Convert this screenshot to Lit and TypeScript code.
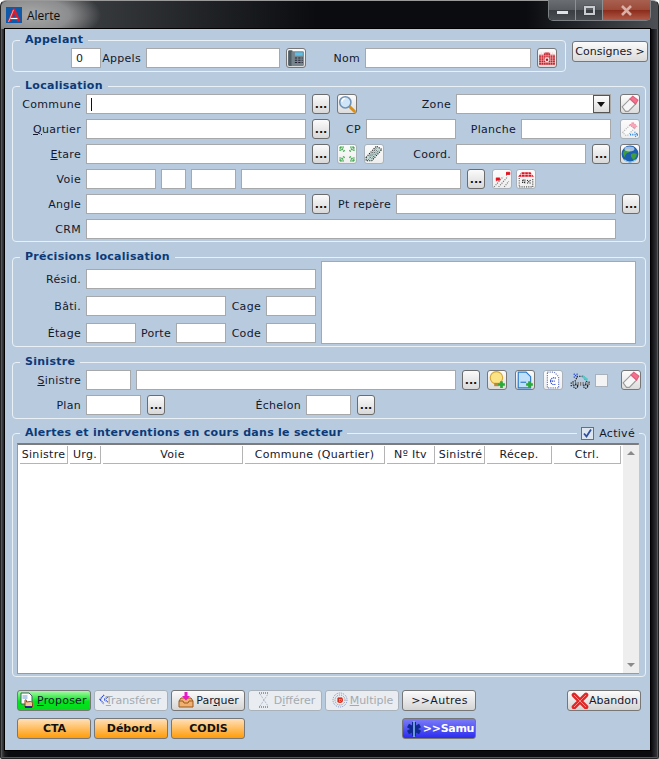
import { css, html, LitElement, svg } from "lit";
import { customElement } from "lit/decorators.js";

const icons = {
  phone: svg`<rect x="1" y="1" width="4" height="14" rx="1" fill="#4e5c64"/><rect x="4" y="2" width="11" height="13" rx="1" fill="#76858c"/><rect x="7" y="3" width="7" height="3" fill="#5cc0e8"/><path d="M7 8h2M10 8h2M13 8h1M7 10h2M10 10h2M13 10h1M7 12h2M10 12h2M13 12h1" stroke="#223" stroke-width="1"/>`,
  folderRed: svg`<path d="M1 5h4l1-2h4l1 2h4v9H1z" fill="#c41c28"/><path d="M1 6h14M1 8h14M1 10h14M1 12h14M3 3v11M5 3v11M7 3v11M9 3v11M11 3v11M13 3v11" stroke="#f6c4c4" stroke-width=".5"/><circle cx="8" cy="9.500" r="2.200" fill="#fbe8e8"/><circle cx="8" cy="9.500" r="1.100" fill="#b01820"/>`,
  search: svg`<path d="M10 10l4.500 4.500" stroke="#d8901c" stroke-width="2.600" stroke-linecap="round"/><circle cx="6.500" cy="6.500" r="5" fill="#cfe6f8" stroke="#6f93b8" stroke-width="1.400"/><path d="M3.500 6a3 3 0 0 1 3-3" stroke="#fff" stroke-width="1.300" fill="none"/>`,
  eraser: svg`<path d="M1 10.500L8 3.500l5 4.500-6.500 6.500H4z" fill="#f6f6f6" stroke="#9a9a9a"/><path d="M8 3.500L10.500 1 15 4.500 13 8z" fill="#f4708e" stroke="#e0607c"/>`,
  eraserOff: svg`<path d="M1.500 11L8 4.500l4 3-6 6H4z" fill="#fafafa" stroke="#b4b4b4" stroke-dasharray="1 1"/><path d="M8 4.500l2.500-2.500 3.500 3.500-2 2z" fill="#f6a8b8" stroke="#f08aa0" stroke-dasharray="1 1"/><path d="M8 13h7" stroke="#2a86e0" stroke-width="1.600" stroke-dasharray="1 1"/><path d="M12 10.500l3 2.500-3 2.500" fill="none" stroke="#2a86e0" stroke-dasharray="1 1"/>`,
  expand: svg`<g fill="none" stroke="#3ca84a" stroke-width="1.800" stroke-dasharray="1.200 .8"><path d="M2 2l4 4M2 2h3M2 2v3M14 2l-4 4M14 2h-3M14 2v3M2 14l4-4M2 14h3M2 14v-3M14 14l-4-4M14 14h-3M14 14v-3"/></g>`,
  map: svg`<path d="M1 11L10 1l5 3-9 10-5 0z" fill="#c4dcd8" stroke="#222" stroke-dasharray="1 1"/><path d="M4 10l6-7M6 12l6-7M3 13l8-9" stroke="#333" stroke-width=".8" stroke-dasharray="1 1"/>`,
  globe: svg`<circle cx="8" cy="8" r="7.500" fill="#1c5fae"/><path d="M2 6c2-2 4-3 6-2 1 1-1 3-2 3S3 9 4 11C2 10 1.500 8 2 6zM9 8c2-1 4-1 5 0 0 2-1 4-3 5-1-1-3-3-2-5z" fill="#3f9e3a"/><ellipse cx="7.500" cy="3.500" rx="4.500" ry="2.200" fill="#fff" opacity=".6"/><path d="M3 13a7 7 0 0 0 10 0" stroke="#8fd0f8" fill="none"/>`,
  road: svg`<path d="M1 15L9 6M5 15l8-9M10 15l4-5" stroke="#777" stroke-dasharray="1 1" fill="none"/><path d="M3 10V7M3 7h3v2H3zM12 5V2M12 2h3v2h-3z" fill="#e01020" stroke="#e01020" stroke-width=".7"/>`,
  house: svg`<path d="M1 6l3-4h8l3 4z" fill="#e01020"/><path d="M1 4h14M4 2v4M7 2v4M10 2v4M13 2v4" stroke="#fff" stroke-width=".5"/><path d="M2 7v8h12V7" fill="none" stroke="#555" stroke-dasharray="1 1"/><path d="M5 9h2v3M5 9v2h2M9 9l3 3M12 9l-3 3" stroke="#222" stroke-dasharray="1 .6" fill="none"/>`,
  bulb: svg`<circle cx="7.500" cy="6" r="5.500" fill="#fbe486" stroke="#d8a838"/><path d="M5.500 10.500h4v3h-4z" fill="#b88838"/><path d="M12 9v6M9 12h6" stroke="#2aa838" stroke-width="2.400"/>`,
  docAdd: svg`<path d="M2 1h7l4 4v10H2z" fill="#bfe0f8" stroke="#2a78c8"/><path d="M4 10h5" stroke="#2a78c8"/><path d="M12 9v6M9 12h6" stroke="#2aa838" stroke-width="2.400"/>`,
  docE: svg`<path d="M3 1h6l4 4v10H3z" fill="#fff" stroke="#6a7ac0" stroke-dasharray="1 1"/><path d="M10.500 6.500a3 3 0 1 0 0 5M5.500 9h4" fill="none" stroke="#2040d0" stroke-dasharray="1 .6"/>`,
  car: svg`<path d="M1 13v-3l3-1 2-4h5l2 4 3 1v2" fill="none" stroke="#222" stroke-dasharray="1 1"/><path d="M2 11h13" stroke="#777" stroke-width="3" stroke-dasharray="1 1"/><circle cx="4.500" cy="13" r="1.600" fill="none" stroke="#222" stroke-dasharray="1 .6"/><circle cx="12.500" cy="13" r="1.600" fill="none" stroke="#222" stroke-dasharray="1 .6"/><path d="M3 3l3 3M6 3L3 6" stroke="#2040d0" stroke-dasharray="1 .6"/><path d="M10 5l4 3" stroke="#58c8c8" stroke-width="2"/>`,
  propose: svg`<path d="M2 1h8l3 3v8H2z" fill="#fff" stroke="#557"/><path d="M3.500 4h5M3.500 6h5" stroke="#6a9ad0"/><path d="M6 15V8.500c0-1 1.500-1 1.500 0V10l4-.5c1 0 2 .5 2 2V15z" fill="#f4c79a" stroke="#8a4a20"/><path d="M6 15h7" stroke="#1010a0" stroke-width="1.600"/>`,
  transfer: svg`<path d="M6 3L2 7.500 6 12M10 5L6 7.500l4 2.500" fill="none" stroke="#2040d0" stroke-width="1.400" stroke-dasharray="1 .7"/>`,
  park: svg`<path d="M1 9l2-3h10l2 3v6H1z" fill="#f0b070" stroke="#9a5a20"/><path d="M1 9h4l1 2h4l1-2h4" fill="none" stroke="#9a5a20"/><path d="M6.500 0h3v4h2.500L8 8.500 4 4h2.500z" fill="#e818c8"/>`,
  hourglass: svg`<g fill="none" stroke-dasharray="1 1"><path d="M3 1h10M3 15h10" stroke="#c89060" stroke-width="2"/><path d="M4 2l4 6 4-6M4 14l4-6 4 6" stroke="#9ab"/></g>`,
  multiple: svg`<circle cx="8" cy="8" r="7" fill="none" stroke="#7a8cc0" stroke-dasharray="1 1"/><circle cx="8" cy="8" r="5" fill="none" stroke="#888" stroke-dasharray="1 1"/><circle cx="8" cy="8" r="3" fill="#d83020"/><path d="M5 8h6M8 5v6" stroke="#fff" stroke-width=".6" stroke-dasharray="1 1"/>`,
  cross: svg`<path d="M3 3l12 12M15 3L3 15" stroke="#e02828" stroke-width="4.600" stroke-linecap="round"/><path d="M3 3l12 12M15 3L3 15" stroke="#f88" stroke-width="1"/>`,
  star: svg`<g stroke="#0e2a90" stroke-width="4"><path d="M9 2v14M3 5.500l12 7M15 5.500l-12 7"/></g><path d="M9 1v16" stroke="#8fc0f0" stroke-width="1.500"/>`,
};
type IconName = keyof typeof icons;

const columns = [
  ["Sinistre", 50],
  ["Urg.", 33],
  ["Voie", 142],
  ["Commune (Quartier)", 142],
  ["Nº Itv", 50],
  ["Sinistré", 50],
  ["Récep.", 67],
  ["Ctrl.", 69],
] as const;

@customElement("app-root")
export class AppRoot extends LitElement {
  private lab(text: unknown, w: number) {
    return html`<label class="lab" style="width:${w}px">${text}</label>`;
  }

  private inp(w: number, ml = 0, value = "") {
    return html`<input class="inp" style="width:${w}px;margin-left:${ml}px" .value=${value} />`;
  }

  private more(ml = 6) {
    return html`<button class="more" style="margin-left:${ml}px">...</button>`;
  }

  private ic(name: IconName, ml = 7, off = false) {
    return html`<button class="ic ${off ? "off" : ""}" style="margin-left:${ml}px">
      <svg width="18" height="18" viewBox="0 0 16 16">${icons[name]}</svg>
    </button>`;
  }

  private action(name: IconName, label: unknown, kind = "") {
    return html`<button class="act ${kind}">
      <svg width="18" height="17" viewBox="0 0 18 17">${icons[name]}</svg><span>${label}</span>
    </button>`;
  }

  render() {
    return html`
      <div class="window">
        <div class="title">
          <svg class="logo" width="16" height="16" viewBox="0 0 16 16">
            <rect width="16" height="16" fill="#0f5aa8" />
            <path d="M1.500 14.500L7 1.500h2l5.500 13h-3.200L8 6.500l-3.300 8z" fill="#e01c2c" />
            <path d="M4.500 11.500h7" stroke="#fff" stroke-width="1.200" />
            <path d="M2.500 15L7.500 2.800" stroke="#fff" stroke-width=".6" />
          </svg>
          <span class="caption">Alerte</span>
          <div class="caps">
            <div class="cap"><i class="min"></i></div>
            <div class="cap"><i class="max"></i></div>
            <div class="cap close">
              <svg width="13" height="11" viewBox="0 0 13 11">
                <path d="M2 1l9 9M11 1l-9 9" stroke="#d8b0a8" stroke-width="2.600" />
              </svg>
            </div>
          </div>
        </div>

        <div class="client">
          <div class="top">
            <fieldset class="appelant">
              <legend>Appelant</legend>
              <div class="row">
                ${this.inp(30, 58, "0")} ${this.lab("Appels", 40)} ${this.inp(134)}
                ${this.ic("phone", 6)} ${this.lab("Nom", 54)} ${this.inp(166)}
                ${this.ic("folderRed", 6)}
              </div>
            </fieldset>
            <button class="consignes">Consignes &gt;</button>
          </div>

          <fieldset>
            <legend>Localisation</legend>
            <div class="rows">
              <div class="row">
                ${this.lab("Commune", 68)}
                <input class="inp caret" style="width:220px" />
                ${this.more()} ${this.ic("search")} ${this.lab("Zone", 94)}
                <div class="combo"><span class="arrow"></span></div>
                ${this.ic("eraser", 9)}
              </div>
              <div class="row">
                ${this.lab(html`<u>Q</u>uartier`, 68)} ${this.inp(220)} ${this.more()}
                ${this.lab("CP", 31)} ${this.inp(90)} ${this.lab("Planche", 60)} ${this.inp(90)}
                ${this.ic("eraserOff", 9, true)}
              </div>
              <div class="row">
                ${this.lab(html`<u>E</u>tare`, 68)} ${this.inp(220)} ${this.more()}
                ${this.ic("expand", 7, true)} ${this.ic("map", 7, true)}
                ${this.lab("Coord.", 67)} ${this.inp(130)} ${this.more()} ${this.ic("globe", 10)}
              </div>
              <div class="row">
                ${this.lab("Voie", 68)} ${this.inp(70)} ${this.inp(25, 5)} ${this.inp(45, 5)}
                ${this.inp(220, 5)} ${this.more()} ${this.ic("road", 7, true)}
                ${this.ic("house", 4, true)}
              </div>
              <div class="row">
                ${this.lab("Angle", 68)} ${this.inp(220)} ${this.more()}
                ${this.lab("Pt repère", 61)} ${this.inp(220)} ${this.more()}
              </div>
              <div class="row">${this.lab("CRM", 68)} ${this.inp(530)}</div>
            </div>
          </fieldset>

          <fieldset class="spaced">
            <legend>Précisions localisation</legend>
            <div class="precisions">
              <div class="precis-rows">
                <div class="row">${this.lab("Résid.", 68)} ${this.inp(230)}</div>
                <div class="row">
                  ${this.lab("Bâti.", 68)} ${this.inp(140)} ${this.lab("Cage", 35)} ${this.inp(50)}
                </div>
                <div class="row">
                  ${this.lab("Étage", 68)} ${this.inp(50)} ${this.lab("Porte", 35)} ${this.inp(50)}
                  ${this.lab("Code", 35)} ${this.inp(50)}
                </div>
              </div>
              <textarea class="notes"></textarea>
            </div>
          </fieldset>

          <fieldset class="spaced sinistre">
            <legend>Sinistre</legend>
            <div class="rows">
              <div class="row">
                ${this.lab(html`<u>S</u>inistre`, 68)} ${this.inp(45)} ${this.inp(320, 5)}
                ${this.more()} ${this.ic("bulb")} ${this.ic("docAdd", 8)}
                ${this.ic("docE", 8, true)}
                <span class="bare"
                  ><svg width="20" height="20" viewBox="0 0 16 16">${icons.car}</svg></span
                >
                <span class="tick"></span>
                ${this.ic("eraser", 13)}
              </div>
              <div class="row">
                ${this.lab("Plan", 68)} ${this.inp(55)} ${this.more()}
                ${this.lab("Échelon", 136)} ${this.inp(45)} ${this.more()}
              </div>
            </div>
          </fieldset>

          <fieldset class="alertes">
            <legend>Alertes et interventions en cours dans le secteur</legend>
            <div class="active">
              <span class="tick on">
                <svg width="11" height="11" viewBox="0 0 11 11">
                  <path d="M2 5.500l2.500 3L9 1.500" fill="none" stroke="#2f4f9f" stroke-width="1.800" />
                </svg>
              </span>
              <span>Activé</span>
            </div>
            <div class="grid">
              <div class="list">
                <div class="heads">
                  ${columns.map(
                    ([name, w]) => html`<div class="head" style="width:${w}px"><span>${name}</span></div>`
                  )}
                </div>
              </div>
              <div class="scroll">
                <i class="up"></i>
                <i class="down"></i>
              </div>
            </div>
          </fieldset>

          <div class="footer">
            <div class="btns">
              ${this.action("propose", html`<u>P</u>roposer`, "go")}
              ${this.action("transfer", html`<u>T</u>ransférer`, "dis narrow")}
              ${this.action("park", html`Par<u>q</u>uer`)}
              ${this.action("hourglass", html`D<u>i</u>fférer`, "dis")}
              ${this.action("multiple", html`<u>M</u>ultiple`, "dis")}
              <button class="act plain">&gt;&gt;Autres</button>
              <span class="push"></span>
              ${this.action("cross", "Abandon", "quit")}
            </div>
            <div class="btns">
              <button class="act orange">CTA</button>
              <button class="act orange">Débord.</button>
              <button class="act orange">CODIS</button>
              <span class="skip"></span>
              ${this.action("star", ">>Samu", "samu")}
            </div>
          </div>
        </div>
      </div>
    `;
  }

  static styles = css`
    :host {
      display: block;
      width: 659px;
      height: 759px;
      background: #fff;
      font: 11px "DejaVu Sans", Verdana, sans-serif;
      color: #14182c;
    }

    * {
      box-sizing: border-box;
    }

    .window {
      height: 759px;
      border-radius: 6px 6px 2px 2px;
      border: 1px solid #222;
      border-top-color: #9a9a9a;
      background: linear-gradient(90deg, #4c4f52 0, #16181b 4px, #0a0c10 8px, #0a0c10 99%, #3c3e40 100%);
      display: flex;
      flex-direction: column;
      padding: 0 7px 7px 3px;
      box-shadow: inset 0 0 0 1px #55585a;
    }

    .title {
      height: 28px;
      margin: 0 -7px 0 -3px;
      display: flex;
      align-items: flex-start;
      border-radius: 6px 6px 0 0;
      background:
        radial-gradient(ellipse 70px 30px at 30px 14px, #a9a9a9 0, #8c8d8e 55%, rgba(90, 92, 94, 0) 100%),
        linear-gradient(90deg, #4a4d50 0, #0a0c10 48%, #0a0c10 80%, #4c5054 100%);
    }

    .logo {
      margin: 6px 0 0 5px;
      flex: none;
    }

    .caption {
      margin: 6px 0 0 5px;
      font: 12px "Open Sans", "Noto Sans", sans-serif;
      line-height: 17px;
      color: #0c0c0c;
    }

    .caps {
      margin: -1px 7px 0 auto;
      display: flex;
      height: 21px;
      border: 1px solid #7d8184;
      border-top: none;
      border-radius: 0 0 5px 5px;
      overflow: hidden;
    }

    .cap {
      width: 27px;
      display: flex;
      align-items: center;
      justify-content: center;
      background: linear-gradient(#6a6e72 0, #585c60 50%, #3a3e42 52%, #4a4e52 100%);
      border-right: 1px solid #8d9194;
    }

    .cap.close {
      width: 47px;
      border-right: none;
      background: linear-gradient(#a86050 0, #9c4a38 50%, #8c2c1c 52%, #b05a48 100%);
    }

    .min {
      width: 11px;
      height: 3px;
      margin-top: 5px;
      background: #dfe2e5;
    }

    .max {
      width: 11px;
      height: 9px;
      border: 2px solid #c8ccd0;
      box-shadow: 0 0 1px #222;
    }

    .client {
      width: 645px;
      height: 721px;
      margin-left: 1px;
      padding: 4px 0 0 7px;
      background: #b8cbde;
      outline: 1px solid #000;
      display: flex;
      flex-direction: column;
    }

    fieldset {
      margin: 7px 0 0;
      padding: 0 0 2px;
      width: 634px;
      border: 1px solid #e9f0f6;
      border-radius: 4px;
      min-width: 0;
    }

    fieldset.spaced {
      margin-top: 8px;
    }

    fieldset.sinistre {
      padding-bottom: 3px;
    }

    legend {
      margin-left: 7px;
      padding: 0 5px;
      height: 14px;
      line-height: 14px;
      font-weight: bold;
      font-size: 11px;
      color: #0c3a78;
      letter-spacing: 0.28px;
    }

    .top {
      display: flex;
      align-items: flex-start;
    }

    .top fieldset {
      margin-top: 0;
    }

    .appelant {
      width: 554px;
      padding-bottom: 3px;
    }

    .appelant .row {
      margin-top: 1px;
    }

    .consignes {
      width: 76px;
      height: 21px;
      margin: 8px 0 0 6px;
      padding: 0;
      border: 1px solid #777;
      border-radius: 3px;
      background: linear-gradient(#fbfbfb, #dadada);
      font: inherit;
      color: inherit;
    }

    .rows {
      display: flex;
      flex-direction: column;
      gap: 5px;
      margin-top: 1px;
    }

    .row {
      display: flex;
      align-items: center;
      height: 20px;
    }

    .lab {
      flex: none;
      margin-right: 5px;
      text-align: right;
      white-space: nowrap;
      letter-spacing: 0.3px;
    }

    .inp {
      flex: none;
      height: 20px;
      padding: 0 4px;
      border: 1px solid #a6a8aa;
      background: #fff;
      font: inherit;
      color: inherit;
      outline: none;
      border-radius: 0;
    }

    .caret {
      background: linear-gradient(#111, #111) 4px 3px / 1px 13px no-repeat #fff;
    }

    .more {
      flex: none;
      width: 18px;
      height: 20px;
      padding: 0;
      border: 1px solid #6c6c6c;
      border-radius: 3px;
      background: linear-gradient(#fbfbfb, #d8d8d8);
      font: bold 11px "DejaVu Sans", sans-serif;
      color: #111;
      line-height: 1;
    }

    .ic {
      flex: none;
      width: 20px;
      height: 20px;
      padding: 0;
      border: 1px solid #777;
      border-radius: 3px;
      background: linear-gradient(#fcfcfc, #dcdcdc);
      display: flex;
      align-items: center;
      justify-content: center;
    }

    .ic.off {
      border-color: #a9b2ba;
      background: linear-gradient(#fbfbfb, #eeeeee);
    }

    .combo {
      width: 155px;
      height: 20px;
      border: 1px solid #a6a8aa;
      background: #fff;
      display: flex;
      justify-content: flex-end;
    }

    .arrow {
      width: 17px;
      height: 18px;
      border: 1px solid #555;
      background: linear-gradient(#fdfdfd, #dcdcdc);
      position: relative;
    }

    .arrow::after {
      content: "";
      position: absolute;
      left: 3px;
      top: 6px;
      border: 4px solid transparent;
      border-top: 5px solid #111;
      border-bottom: none;
    }

    .precisions {
      display: flex;
      margin-top: -3px;
    }

    .precis-rows {
      padding-top: 8px;
      display: flex;
      flex-direction: column;
      gap: 7px;
    }

    .notes {
      width: 315px;
      height: 83px;
      margin: 0 0 0 5px;
      border: 1px solid #a6a8aa;
      background: #fff;
      resize: none;
      outline: none;
    }

    .bare {
      width: 20px;
      height: 20px;
      margin-left: 7px;
      flex: none;
    }

    .tick {
      flex: none;
      width: 13px;
      height: 13px;
      margin-left: 5px;
      border: 1px solid #a9b2ba;
      background: #f4f4f4;
      display: inline-flex;
      align-items: center;
      justify-content: center;
    }

    .tick.on {
      margin: 0;
      border-color: #66707c;
      background: #dde6ef;
    }

    .alertes {
      position: relative;
    }

    .active {
      position: absolute;
      top: -14px;
      right: 6px;
      padding: 0 4px;
      height: 14px;
      display: flex;
      align-items: center;
      gap: 5px;
      background: #b8cbde;
      letter-spacing: 0.3px;
    }

    .grid {
      width: 622px;
      height: 231px;
      margin: 3px 0 0 4px;
      border: 1px solid #9a9a9a;
      border-top: 2px solid #7c7c7c;
      background: #fff;
      display: flex;
    }

    .list {
      flex: 1;
      padding: 1px 0 0 2px;
    }

    .heads {
      display: flex;
    }

    .head {
      flex: none;
      padding-right: 2px;
      height: 18px;
    }

    .head span {
      display: block;
      height: 18px;
      line-height: 18px;
      text-align: center;
      white-space: nowrap;
      letter-spacing: 0.3px;
      border-right: 1px solid #b4b4b4;
      border-bottom: 1px solid #b4b4b4;
    }

    .scroll {
      width: 16px;
      flex: none;
      background: #eeeeee;
      display: flex;
      flex-direction: column;
      justify-content: space-between;
      align-items: center;
      padding: 6px 0;
    }

    .up,
    .down {
      border: 4px solid transparent;
    }

    .up {
      border-top: none;
      border-bottom: 4px solid #8a8a8a;
    }

    .down {
      border-bottom: none;
      border-top: 4px solid #8a8a8a;
    }

    .footer {
      margin: 13px 0 0 5px;
      display: flex;
      flex-direction: column;
      gap: 7px;
    }

    .btns {
      display: flex;
      gap: 3px;
      width: 624px;
    }

    .push {
      margin-left: auto;
    }

    .skip {
      width: 151px;
    }

    .act {
      flex: none;
      width: 74px;
      height: 21px;
      padding: 0 0 0 1px;
      border: 1px solid #777;
      border-radius: 3px;
      background: linear-gradient(#fbfbfb, #d4d4d4);
      font: inherit;
      color: #14182c;
      display: flex;
      align-items: center;
      justify-content: center;
      white-space: nowrap;
    }

    .act svg {
      flex: none;
    }

    .act.go {
      background: linear-gradient(#a8f8a8, #00e818 55%, #08d820);
      justify-content: flex-start;
      letter-spacing: 0.2px;
    }

    .act.dis {
      border-color: #a9b2ba;
      background: #e9edf1;
      color: #a4aab0;
    }

    .act.narrow svg {
      margin: 0 -10px 0 -4px;
    }

    .act.plain {
      letter-spacing: 0.3px;
    }

    .act.orange {
      background: linear-gradient(#ffe0b8, #ff9c08);
      font-weight: bold;
      color: #111;
    }

    .act.samu {
      background: linear-gradient(#7c7cf8, #2a2cf0);
      color: #fff;
      font-weight: bold;
      letter-spacing: -0.3px;
    }
  `;
}

declare global {
  interface HTMLElementTagNameMap {
    "app-root": AppRoot;
  }
}
